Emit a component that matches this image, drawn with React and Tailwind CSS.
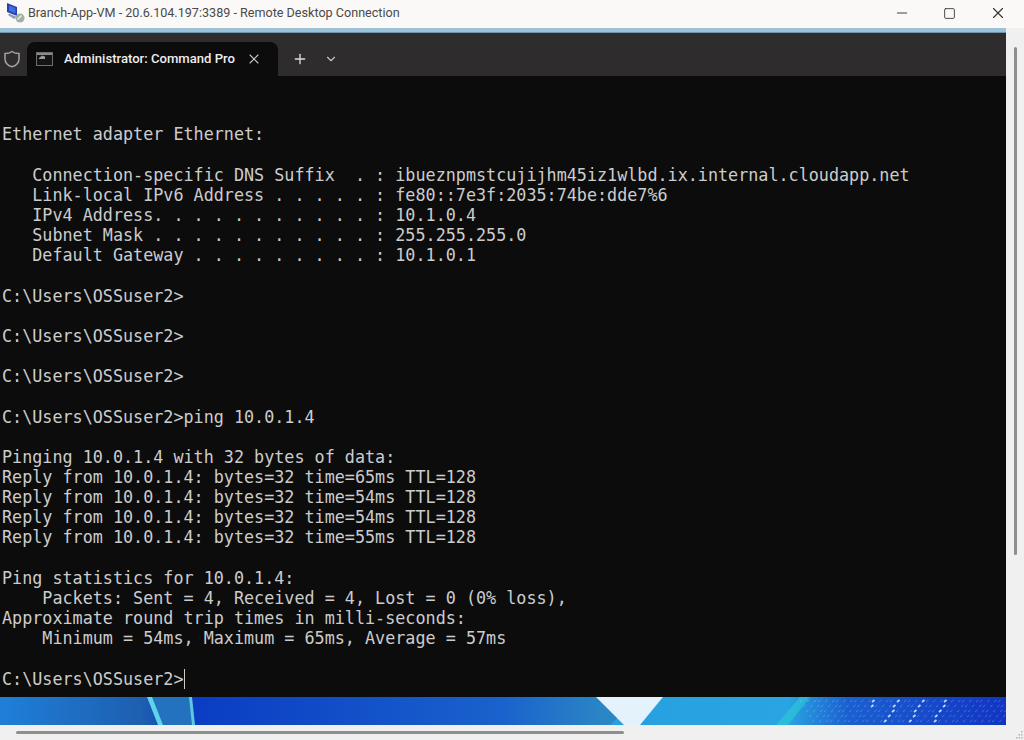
import { X, Plus, ChevronDown, Minus, Square } from 'lucide-react';

const output = `

Ethernet adapter Ethernet:

   Connection-specific DNS Suffix  . : ibueznpmstcujijhm45iz1wlbd.ix.internal.cloudapp.net
   Link-local IPv6 Address . . . . . : fe80::7e3f:2035:74be:dde7%6
   IPv4 Address. . . . . . . . . . . : 10.1.0.4
   Subnet Mask . . . . . . . . . . . : 255.255.255.0
   Default Gateway . . . . . . . . . : 10.1.0.1

C:\\Users\\OSSuser2>

C:\\Users\\OSSuser2>

C:\\Users\\OSSuser2>

C:\\Users\\OSSuser2>ping 10.0.1.4

Pinging 10.0.1.4 with 32 bytes of data:
Reply from 10.0.1.4: bytes=32 time=65ms TTL=128
Reply from 10.0.1.4: bytes=32 time=54ms TTL=128
Reply from 10.0.1.4: bytes=32 time=54ms TTL=128
Reply from 10.0.1.4: bytes=32 time=55ms TTL=128

Ping statistics for 10.0.1.4:
    Packets: Sent = 4, Received = 4, Lost = 0 (0% loss),
Approximate round trip times in milli-seconds:
    Minimum = 54ms, Maximum = 65ms, Average = 57ms

C:\\Users\\OSSuser2>`;

function RdpIcon() {
  return (
    <svg width="20" height="20" viewBox="0 0 20 20" className="shrink-0">
      <path d="M1 0 L11 4 V13 L1 9 Z" fill="#2a3fa8" />
      <path d="M3 2.5 L9.5 5 V10.5 L3 8 Z" fill="#3f6fe0" />
      <path d="M3 10.5 L11 14 L8 16 L2 12 Z" fill="#8f9ab8" />
      <circle cx="14" cy="15" r="4.5" fill="#9fb0a6" />
      <path d="M11.5 16.5 L15.5 12.5" stroke="#e8f0e8" strokeWidth="1.4" />
    </svg>
  );
}

function ShieldIcon() {
  return (
    <svg width="16" height="18" viewBox="0 0 16 18" fill="none" stroke="#a3a3a3" strokeWidth="1.5">
      <path d="M8 1.5 C10 3 12.5 3.6 15 3.6 V9 C15 13 12 15.6 8 16.8 C4 15.6 1 13 1 9 V3.6 C3.5 3.6 6 3 8 1.5 Z" />
    </svg>
  );
}

function TerminalIcon() {
  return (
    <svg width="17" height="14" viewBox="0 0 17 14" className="shrink-0">
      <rect x="0.5" y="0.5" width="16" height="13" fill="#141414" stroke="#6e6e6e" />
      <rect x="1" y="1" width="15" height="2" fill="#8a8a8a" />
      <path d="M3 6 L6 3.5 L9 4.5 V7 H3 Z" fill="#9a9a9a" />
    </svg>
  );
}

function Wallpaper() {
  const streaks = [];
  for (let row = 0; row < 5; row++) {
    for (let col = 0; col < 34; col++) {
      const x = 800 + col * 6 + row * 3 + (col % 3);
      const y = 5 + row * 5;
      const bright = (col + row) % 4 === 0 && x > 870 && x < 950;
      streaks.push(
        <line key={`${row}-${col}`} x1={x} y1={y} x2={x + 2.5} y2={y - 2} stroke="#cfe6ff" strokeWidth={bright ? 1.8 : 0.7} opacity={bright ? 0.9 : 0.4} />
      );
    }
  }

  return (
    <svg width="1006" height="28" viewBox="0 0 1006 28" className="block">
      <defs>
        <linearGradient id="wallBase" x1="0" x2="1" y1="0" y2="0">
          <stop offset="0" stopColor="#1f7fd8" />
          <stop offset="0.14" stopColor="#1d5fb0" />
          <stop offset="0.19" stopColor="#0a3cc4" />
          <stop offset="0.5" stopColor="#1a62cc" />
          <stop offset="0.6" stopColor="#2a86c4" />
        </linearGradient>
        <linearGradient id="wallRight" x1="0" x2="1" y1="0" y2="0">
          <stop offset="0" stopColor="#26a0e0" />
          <stop offset="0.45" stopColor="#2aa4e2" />
          <stop offset="0.6" stopColor="#1a60d0" />
          <stop offset="1" stopColor="#1234c4" />
        </linearGradient>
      </defs>
      <rect width="1006" height="28" fill="url(#wallBase)" />
      <path d="M148 0 H190 L195 28 H160 Z" fill="#2272c0" />
      <path d="M147 0 H152 L163 28 H158 Z" fill="#5fd4e6" />
      <path d="M189 0 H192 L195 28 H192 Z" fill="#5cc8e0" />
      <path d="M640 0 H1006 V28 H610 Z" fill="url(#wallRight)" />
      <path d="M596 0 H663 L640 28 H624 Z" fill="#e4f2fb" />
      <path d="M810 0 H800 L776 28 H788 Z" fill="#2cc4d8" opacity="0.7" />
      {streaks}
    </svg>
  );
}

export default function App() {
  return (
    <div className="flex h-[740px] w-[1024px] flex-col overflow-hidden bg-[#f0f0f0] font-['Roboto',sans-serif]">
      <div className="flex h-[28px] items-center bg-[#fbf9f7] pb-[2px] pl-[6px]">
        <RdpIcon />
        <span className="ml-[2px] text-[12.6px] text-[#4a4a4a]">Branch-App-VM - 20.6.104.197:3389 - Remote Desktop Connection</span>
        <div className="ml-auto flex items-center">
          <Minus size={16} strokeWidth={1.4} className="mr-[33px] text-[#333]" />
          <Square size={13} strokeWidth={1.6} className="mr-[33px] text-[#333]" />
          <X size={18} strokeWidth={1.5} className="mr-[17px] text-[#333]" />
        </div>
      </div>

      <div className="flex min-h-0 flex-1">
        <div className="flex w-[1006px] flex-col">
          <div className="h-[5px] border-b border-[#6f95ab] bg-[#9cc2d8]" />
          <div className="flex h-[43px] items-end bg-[#2e2c2c] pl-[4px]">
            <div className="flex h-[34px] w-[23px] items-center">
              <ShieldIcon />
            </div>
            <div className="flex h-[34px] w-[251px] items-center rounded-t-lg bg-[#0c0c0c] pl-[9px]">
              <TerminalIcon />
              <span className="ml-[11px] text-[13.1px] font-medium whitespace-nowrap text-[#eeeeee]">Administrator: Command Pro</span>
              <X size={16} strokeWidth={1.6} className="ml-[11px] text-[#c8c8c8]" />
            </div>
            <div className="flex h-[34px] items-center pl-[14px]">
              <Plus size={16} strokeWidth={2} className="text-[#dddddd]" />
              <ChevronDown size={14} strokeWidth={2} className="ml-[16px] text-[#c4c4c4]" />
            </div>
          </div>
          <pre className="min-h-0 flex-1 bg-[#0c0c0c] pt-[8px] pl-[2px] font-['DejaVu_Sans_Mono',monospace] text-[16.75px] leading-[20.15px] text-[#cccccc]">
            {output}
            <span className="inline-block h-[20px] w-px bg-[#cccccc] align-top" />
          </pre>
          <Wallpaper />
        </div>
        <div className="flex flex-1 justify-center pt-[19px]">
          <div className="ml-[1px] h-[508px] w-[3px] rounded-sm bg-[#8e8e8e]" />
        </div>
      </div>

      <div className="flex h-[15px] items-center pl-[16px]">
        <div className="h-[3px] w-[608px] rounded-sm bg-[#8e8e8e]" />
        <svg width="8" height="8" viewBox="0 0 8 8" className="mt-[4px] ml-auto" fill="#b5b5b5">
          <rect x="5" y="0" width="1.5" height="1.5" />
          <rect x="2.5" y="3" width="1.5" height="1.5" />
          <rect x="5" y="3" width="1.5" height="1.5" />
          <rect x="0" y="6" width="1.5" height="1.5" />
          <rect x="2.5" y="6" width="1.5" height="1.5" />
          <rect x="5" y="6" width="1.5" height="1.5" />
        </svg>
      </div>
    </div>
  );
}
